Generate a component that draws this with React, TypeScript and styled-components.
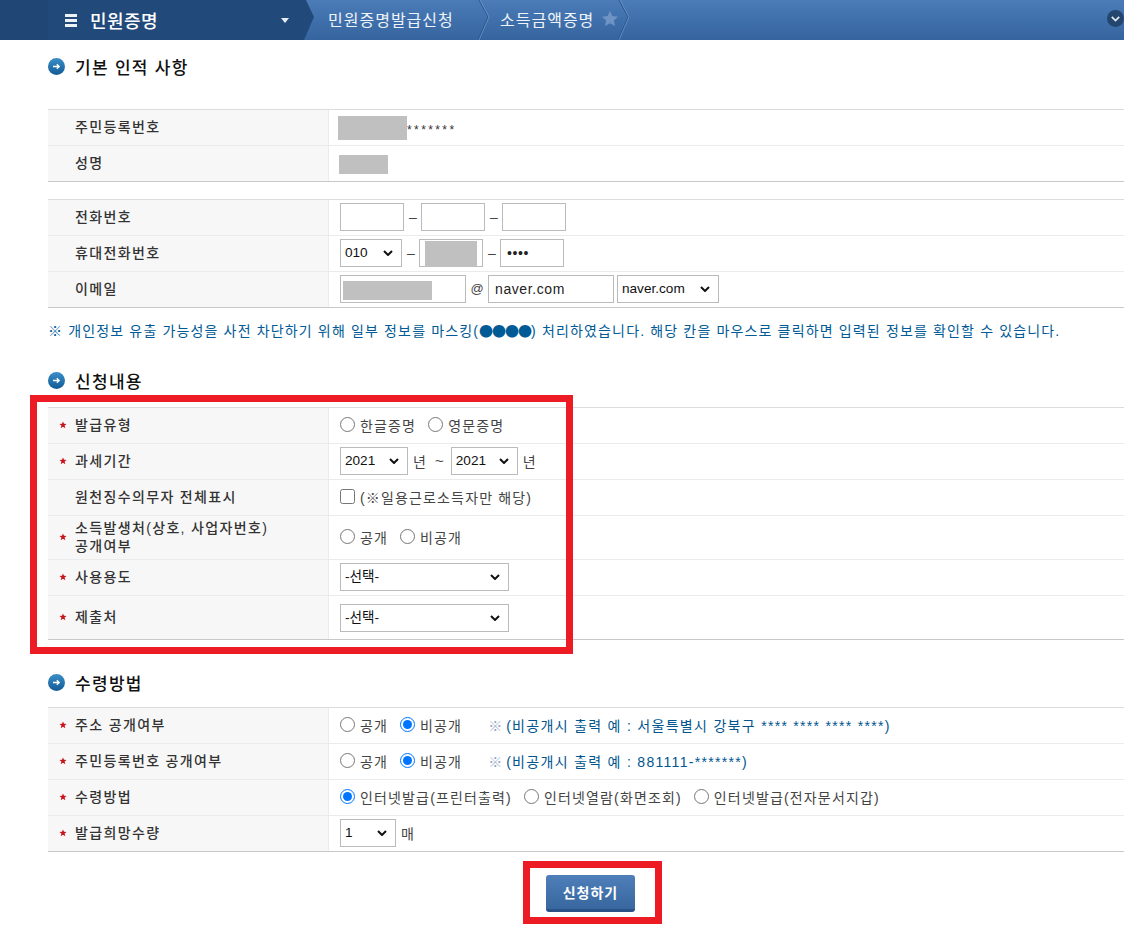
import React from "react";
import styled, { createGlobalStyle } from "styled-components";

const GlobalStyle = createGlobalStyle`
  html, body {
    margin: 0;
    padding: 0;
    background: #fff;
    overflow: hidden;
  }
  body, input, select, button {
    font-family: "Liberation Sans", "Noto Sans CJK KR", sans-serif;
  }
`;

const BulletIcon = () => (
  <svg width="17" height="17" viewBox="0 0 17 17">
    <defs>
      <linearGradient id="bullet" x1="0" y1="0" x2="0" y2="1">
        <stop offset="0" stopColor="#3a8fca" />
        <stop offset="1" stopColor="#135a94" />
      </linearGradient>
    </defs>
    <circle cx="8.5" cy="8.5" r="8.5" fill="url(#bullet)" />
    <path d="M5 8.5h6M8.8 6.2l2.4 2.3-2.4 2.3" fill="none" stroke="#fff" strokeWidth="1.3" />
  </svg>
);

const CrumbEdge = () => (
  <CrumbSvg width="12" height="40" viewBox="0 0 12 40">
    <path d="M1 0l9 17-10 23" fill="none" stroke="#2a5688" strokeWidth="1" />
    <path d="M2 0l9 17-10 23" fill="none" stroke="#6f9bcf" strokeWidth="0.7" />
  </CrumbSvg>
);

const Required = () => (
  <StarMark width="8" height="8" viewBox="0 0 8 8">
    <path d="M4 .5l1 2.3 2.6.2-2 1.6.7 2.6L4 5.800 1.700 7.200l.7-2.600-2-1.600L3 2.800z" fill="#c8141e" />
  </StarMark>
);

const Radio = ({ label, checked, name }: { label: string; checked?: boolean; name: string }) => (
  <RadioLabel>
    <RadioInput type="radio" name={name} defaultChecked={checked} />
    {label}
  </RadioLabel>
);

const Row = ({
  label,
  required,
  height,
  lower,
  children,
}: {
  label: React.ReactNode;
  required?: boolean;
  height?: number;
  lower?: boolean;
  children: React.ReactNode;
}) => (
  <RowBox $height={height ?? 36}>
    <LabelCell>
      {required && <Required />}
      <LabelText>{label}</LabelText>
    </LabelCell>
    <ValueCell $lower={lower}>{children}</ValueCell>
  </RowBox>
);

const Heading = ({ children, $top }: { children: React.ReactNode; $top: number }) => (
  <SectionTitle $top={$top}>
    <BulletIcon />
    <span>{children}</span>
  </SectionTitle>
);

export default function App() {
  return (
    <>
      <GlobalStyle />
      <TopBar>
        <MenuPanel>
          <Hamburger>
            <i />
            <i />
            <i />
          </Hamburger>
          <MenuTitle>민원증명</MenuTitle>
          <Caret />
        </MenuPanel>
        <Crumb $width={168} $pad={14}>
          민원증명발급신청
          <CrumbEdge />
        </Crumb>
        <Crumb $width={140} $pad={18}>
          소득금액증명
          <StarIcon width="16" height="15" viewBox="0 0 16 15">
            <path d="M8 0l2.4 5 5.6.7-4.1 3.8 1.1 5.5L8 12.300 3 15l1.100-5.500L0 5.700 5.600 5z" fill="#6f94c3" />
          </StarIcon>
          <CrumbEdge />
        </Crumb>
        <ExpandButton width="17" height="17" viewBox="0 0 17 17">
          <circle cx="8.500" cy="8.500" r="8.500" fill="#23466f" />
          <path d="M4.800 6.800l3.700 3.700 3.700-3.700" fill="none" stroke="#e4e9f0" strokeWidth="1.700" />
        </ExpandButton>
      </TopBar>

      <Content>
        <Heading $top={17}>기본 인적 사항</Heading>
        <Table $top={34}>
          <Row label="주민등록번호">
            <MaskedId />
            <Stars>*******</Stars>
          </Row>
          <Row label="성명">
            <MaskedName />
          </Row>
        </Table>

        <Table $top={17}>
          <Row label="전화번호">
            <TextBox $width={64} />
            <Dash>–</Dash>
            <TextBox $width={64} />
            <Dash>–</Dash>
            <TextBox $width={64} />
          </Row>
          <Row label="휴대전화번호">
            <SelectBox $width={62} defaultValue="010">
              <option>010</option>
            </SelectBox>
            <Dash>–</Dash>
            <MaskedField>
              <TextBox $width={64} />
              <PhoneMask />
            </MaskedField>
            <Dash>–</Dash>
            <TextBox $width={64} type="password" defaultValue="1234" />
          </Row>
          <Row label="이메일">
            <MaskedField>
              <TextBox $width={126} />
              <EmailMask />
            </MaskedField>
            <AtSign>@</AtSign>
            <TextBox $width={126} defaultValue="naver.com" />
            <SelectBox $width={102} $gap={3} defaultValue="naver.com">
              <option>naver.com</option>
            </SelectBox>
          </Row>
        </Table>

        <Notice>
          ※ 개인정보 유출 가능성을 사전 차단하기 위해 일부 정보를 마스킹(<Dots>●●●●</Dots>) 처리하였습니다. 해당 칸을 마우스로 클릭하면 입력된 정보를 확인할 수 있습니다.
        </Notice>

        <Heading $top={31}>신청내용</Heading>
        <Highlighted>
          <Table $top={0}>
            <Row label="발급유형" required>
              <Radio name="type" label="한글증명" />
              <Radio name="type" label="영문증명" />
            </Row>
            <Row label="과세기간" required>
              <SelectBox $width={68} defaultValue="2021">
                <option>2021</option>
              </SelectBox>
              <UnitText>년</UnitText>
              <Tilde>~</Tilde>
              <SelectBox $width={67} defaultValue="2021">
                <option>2021</option>
              </SelectBox>
              <UnitText>년</UnitText>
            </Row>
            <Row label="원천징수의무자 전체표시">
              <CheckLabel>
                <CheckInput type="checkbox" />
                (※일용근로소득자만 해당)
              </CheckLabel>
            </Row>
            <Row
              height={44}
              required
              label={
                <>
                  소득발생처(상호, 사업자번호)
                  <br />
                  공개여부
                </>
              }
            >
              <Radio name="open" label="공개" />
              <Radio name="open" label="비공개" />
            </Row>
            <Row label="사용용도" required>
              <SelectBox $width={169} defaultValue="-선택-">
                <option>-선택-</option>
              </SelectBox>
            </Row>
            <Row label="제출처" required height={44} lower>
              <SelectBox $width={169} defaultValue="-선택-">
                <option>-선택-</option>
              </SelectBox>
            </Row>
          </Table>
          <RedFrame />
        </Highlighted>

        <Heading $top={33}>수령방법</Heading>
        <Table $top={16}>
          <Row label="주소 공개여부" required>
            <Radio name="addr" label="공개" />
            <Radio name="addr" label="비공개" checked />
            <Hint>※</Hint>
            <HintText>(비공개시 출력 예 : 서울특별시 강북구 **** **** **** ****)</HintText>
          </Row>
          <Row label="주민등록번호 공개여부" required>
            <Radio name="rrn" label="공개" />
            <Radio name="rrn" label="비공개" checked />
            <Hint>※</Hint>
            <HintText>(비공개시 출력 예 : 881111-*******)</HintText>
          </Row>
          <Row label="수령방법" required>
            <Radio name="recv" label="인터넷발급(프린터출력)" checked />
            <Radio name="recv" label="인터넷열람(화면조회)" />
            <Radio name="recv" label="인터넷발급(전자문서지갑)" />
          </Row>
          <Row label="발급희망수량" required>
            <SelectBox $width={56} defaultValue="1">
              <option>1</option>
            </SelectBox>
            <UnitText>매</UnitText>
          </Row>
        </Table>

        <SubmitRow>
          <SubmitFrame>
            <SubmitButton type="button">신청하기</SubmitButton>
          </SubmitFrame>
        </SubmitRow>
      </Content>
    </>
  );
}

const TopBar = styled.div`
  display: flex;
  position: relative;
  height: 40px;
  background: linear-gradient(#4b7cb8, #35649e);
  color: #fff;
`;

const MenuPanel = styled.div`
  display: flex;
  align-items: center;
  width: 314px;
  padding-left: 65px;
  box-sizing: border-box;
  background: linear-gradient(90deg, #1f4674 48px, #214a7b 48px);
  clip-path: polygon(0 0, 306px 0, 314px 17px, 304px 40px, 0 40px);
`;

const Hamburger = styled.div`
  display: flex;
  flex-direction: column;
  gap: 2px;
  width: 12px;
  margin-right: 13px;

  i {
    display: block;
    height: 3px;
    background: #eef2f7;
  }
`;

const MenuTitle = styled.div`
  flex: 1;
  font-size: 18px;
  font-weight: 500;
  letter-spacing: 0.4px;
`;

const Caret = styled.div`
  width: 0;
  height: 0;
  margin-right: 25px;
  border-left: 4px solid transparent;
  border-right: 4px solid transparent;
  border-top: 5px solid #e8edf3;
`;

const Crumb = styled.div<{ $width: number; $pad: number }>`
  position: relative;
  display: flex;
  align-items: center;
  width: ${(p) => p.$width}px;
  padding: 0 0 3px ${(p) => p.$pad}px;
  box-sizing: border-box;
  font-size: 16px;
  letter-spacing: 1px;
  color: #f0f4f9;
`;

const CrumbSvg = styled.svg`
  position: absolute;
  right: -8px;
  top: 0;
`;

const StarIcon = styled.svg`
  margin-left: 8px;
`;

const ExpandButton = styled.svg`
  position: absolute;
  right: 0;
  top: 10px;
`;

const Content = styled.main`
  padding-left: 48px;
`;

const SectionTitle = styled.h2<{ $top: number }>`
  display: flex;
  align-items: center;
  gap: 10px;
  height: 18px;
  margin: ${(p) => p.$top}px 0 0;
  font-size: 17px;
  font-weight: 500;
  letter-spacing: 1.300px;
  color: #111;
`;

const Table = styled.div<{ $top: number }>`
  margin-top: ${(p) => p.$top}px;
  border-top: 1px solid #dcdcdc;
  border-bottom: 1px solid #c8c8c8;

  & > div:last-child {
    border-bottom: 0;
  }
`;

const RowBox = styled.div<{ $height: number }>`
  display: flex;
  height: ${(p) => p.$height - 1}px;
  border-bottom: 1px solid #ebebeb;
`;

const LabelCell = styled.div`
  position: relative;
  display: flex;
  align-items: center;
  flex: 0 0 281px;
  padding: 0 0 2px 27px;
  box-sizing: border-box;
  background: #f7f7f7;
  border-right: 1px solid #ebebeb;
`;

const StarMark = styled.svg`
  position: absolute;
  left: 11px;
  top: 50%;
  margin-top: -5px;
`;

const LabelText = styled.div`
  font-size: 14px;
  font-weight: 500;
  line-height: 18px;
  letter-spacing: 1.350px;
  color: #333;
`;

const ValueCell = styled.div<{ $lower?: boolean }>`
  display: flex;
  align-items: center;
  flex: 1;
  padding: ${(p) => (p.$lower ? "0 0 0 11px" : "0 0 2px 11px")};
  font-size: 14px;
  letter-spacing: 1.150px;
  color: #444;
`;

const Mask = styled.div`
  background: #c0c0c0;
`;

const MaskedId = styled(Mask)`
  width: 69px;
  height: 24px;
  margin: 2px 0 0 -2px;
`;

const Stars = styled.span`
  margin-top: 7px;
  font-size: 12px;
  letter-spacing: 2.400px;
  color: #333;
`;

const MaskedName = styled(Mask)`
  width: 49px;
  height: 19px;
  margin: 4px 0 0 -1px;
`;

const MaskedField = styled.div`
  position: relative;
  display: flex;
`;

const PhoneMask = styled(Mask)`
  position: absolute;
  left: 6px;
  top: 2px;
  width: 52px;
  height: 26px;
`;

const EmailMask = styled(Mask)`
  position: absolute;
  left: 3px;
  top: 6px;
  width: 89px;
  height: 19px;
`;

const TextBox = styled.input<{ $width: number }>`
  width: ${(p) => p.$width}px;
  height: 28px;
  padding: 0 6px;
  box-sizing: border-box;
  border: 1px solid #bbb;
  border-radius: 0;
  outline: none;
  font-size: 14px;
  letter-spacing: 0.6px;
  color: #222;
`;

const SelectBox = styled.select<{ $width: number; $gap?: number }>`
  appearance: none;
  width: ${(p) => p.$width}px;
  height: 28px;
  margin-left: ${(p) => p.$gap ?? 0}px;
  padding: 0 0 0 4px;
  box-sizing: border-box;
  border: 1px solid #bbb;
  border-radius: 0;
  background: #fff
    url("data:image/svg+xml,%3Csvg xmlns='http://www.w3.org/2000/svg' width='10' height='6'%3E%3Cpath d='M1 1l4 4 4-4' fill='none' stroke='%23111' stroke-width='2'/%3E%3C/svg%3E")
    no-repeat right 8px center;
  font-size: 13.600px;
  color: #111;
`;

const Dash = styled.span`
  width: 16px;
  padding-left: 1px;
  text-align: center;
  letter-spacing: 0;
  color: #444;
`;

const AtSign = styled.span`
  width: 22px;
  text-align: center;
  font-size: 13px;
  letter-spacing: 0;
`;

const UnitText = styled.span`
  margin-left: 5px;
`;

const Tilde = styled.span`
  margin: 0 7px 0 8px;
  font-size: 15px;
  letter-spacing: 0;
`;

const RadioLabel = styled.label`
  display: inline-flex;
  align-items: center;
  margin-right: 12px;
`;

const RadioInput = styled.input`
  width: 15px;
  height: 15px;
  margin: 0 5px 0 0;
`;

const CheckLabel = styled.label`
  display: inline-flex;
  align-items: center;
`;

const CheckInput = styled.input`
  width: 15px;
  height: 15px;
  margin: 0 5px 0 0;
`;

const Hint = styled.span`
  margin: 0 4px 0 14px;
  letter-spacing: 0;
  color: #8fa9c7;
`;

const HintText = styled.span`
  color: #00558f;
  font-size: 14px;
  letter-spacing: 1.300px;
`;

const Notice = styled.p`
  margin: 12px 0 0;
  height: 20px;
  line-height: 20px;
  font-size: 14px;
  letter-spacing: 1.150px;
  white-space: nowrap;
  color: #005a96;
`;

const Dots = styled.span`
  font-family: "Noto Sans CJK KR", sans-serif;
  letter-spacing: -1px;
`;

const Highlighted = styled.div`
  position: relative;
  margin-top: 18px;
`;

const RedFrame = styled.div`
  position: absolute;
  left: -18px;
  top: -12px;
  width: 529px;
  height: 245px;
  border: 7px solid #ed1c24;
  pointer-events: none;
`;

const SubmitRow = styled.div`
  display: flex;
  margin: 9px 0 0 475px;
`;

const SubmitFrame = styled.div`
  display: flex;
  padding: 7px 20px 5px 16px;
  border: 7px solid #ed1c24;
`;

const SubmitButton = styled.button`
  width: 89px;
  height: 37px;
  padding: 0;
  border: 0;
  border-bottom: 3px solid #2b5287;
  border-radius: 3px;
  background: linear-gradient(#4f7fb9, #38679f);
  color: #fff;
  font-size: 14px;
  font-weight: 700;
  letter-spacing: 1px;
`;
